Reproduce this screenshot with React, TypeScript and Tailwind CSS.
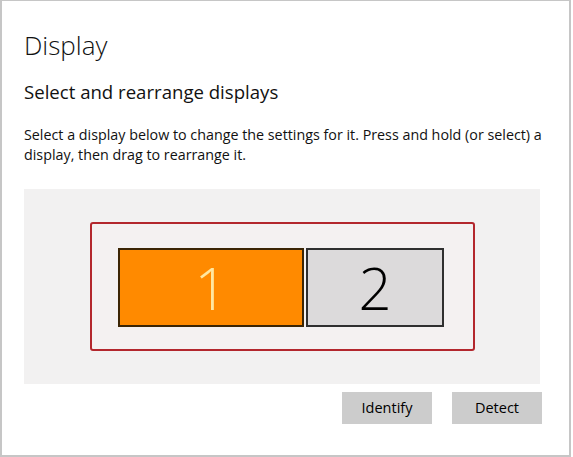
export default function App() {
  return (
    <div
      className="w-[573px] h-[457px] bg-white"
      style={{ fontFamily: '"Open Sans", "Noto Sans", sans-serif' }}
    >
      <div className="flex h-[457px] w-[571px] flex-col border-b-2 border-l-2 border-r-2 border-t border-[#c6c6c6] bg-white pl-[22px] text-[#111]">
        <h1 className="mt-[24px] text-[26px] font-light leading-[40px]">Display</h1>
        <h2 className="mt-[13px] text-[18.6px] leading-[28px]">Select and rearrange displays</h2>
        <p className="mt-[19px] w-[535px] text-[14.3px] leading-[20px]">
          Select a display below to change the settings for it. Press and hold (or select) a display, then drag to
          rearrange it.
        </p>

        {/* arrangement canvas */}
        <div className="mt-[24px] h-[195px] w-[516px] bg-[#f2f1f1] pl-[66px] pt-[33px]">
          <div className="flex h-[129px] w-[385px] rounded-[3px] border-2 border-[#b3272d] bg-[#f4f1f1] pl-[26px] pt-[24px]">
            <div className="flex h-[79px] w-[186px] items-center justify-center border-2 border-[#3b2505] bg-[#ff8a00]">
              <span className="text-[58px] font-light leading-none text-[#ffe7a0]">1</span>
            </div>
            <div className="ml-[2px] flex h-[79px] w-[138px] items-center justify-center border-2 border-[#2f2f2f] bg-[#dcdadb]">
              <span className="text-[58px] font-light leading-none text-black">2</span>
            </div>
          </div>
        </div>

        <div className="mt-[8px] flex w-[518px] justify-end gap-[20px]">
          <button className="h-[32px] w-[90px] bg-[#cccccc] text-[14.5px] text-black">Identify</button>
          <button className="h-[32px] w-[90px] bg-[#cccccc] text-[14.5px] text-black">Detect</button>
        </div>
      </div>
    </div>
  )
}
